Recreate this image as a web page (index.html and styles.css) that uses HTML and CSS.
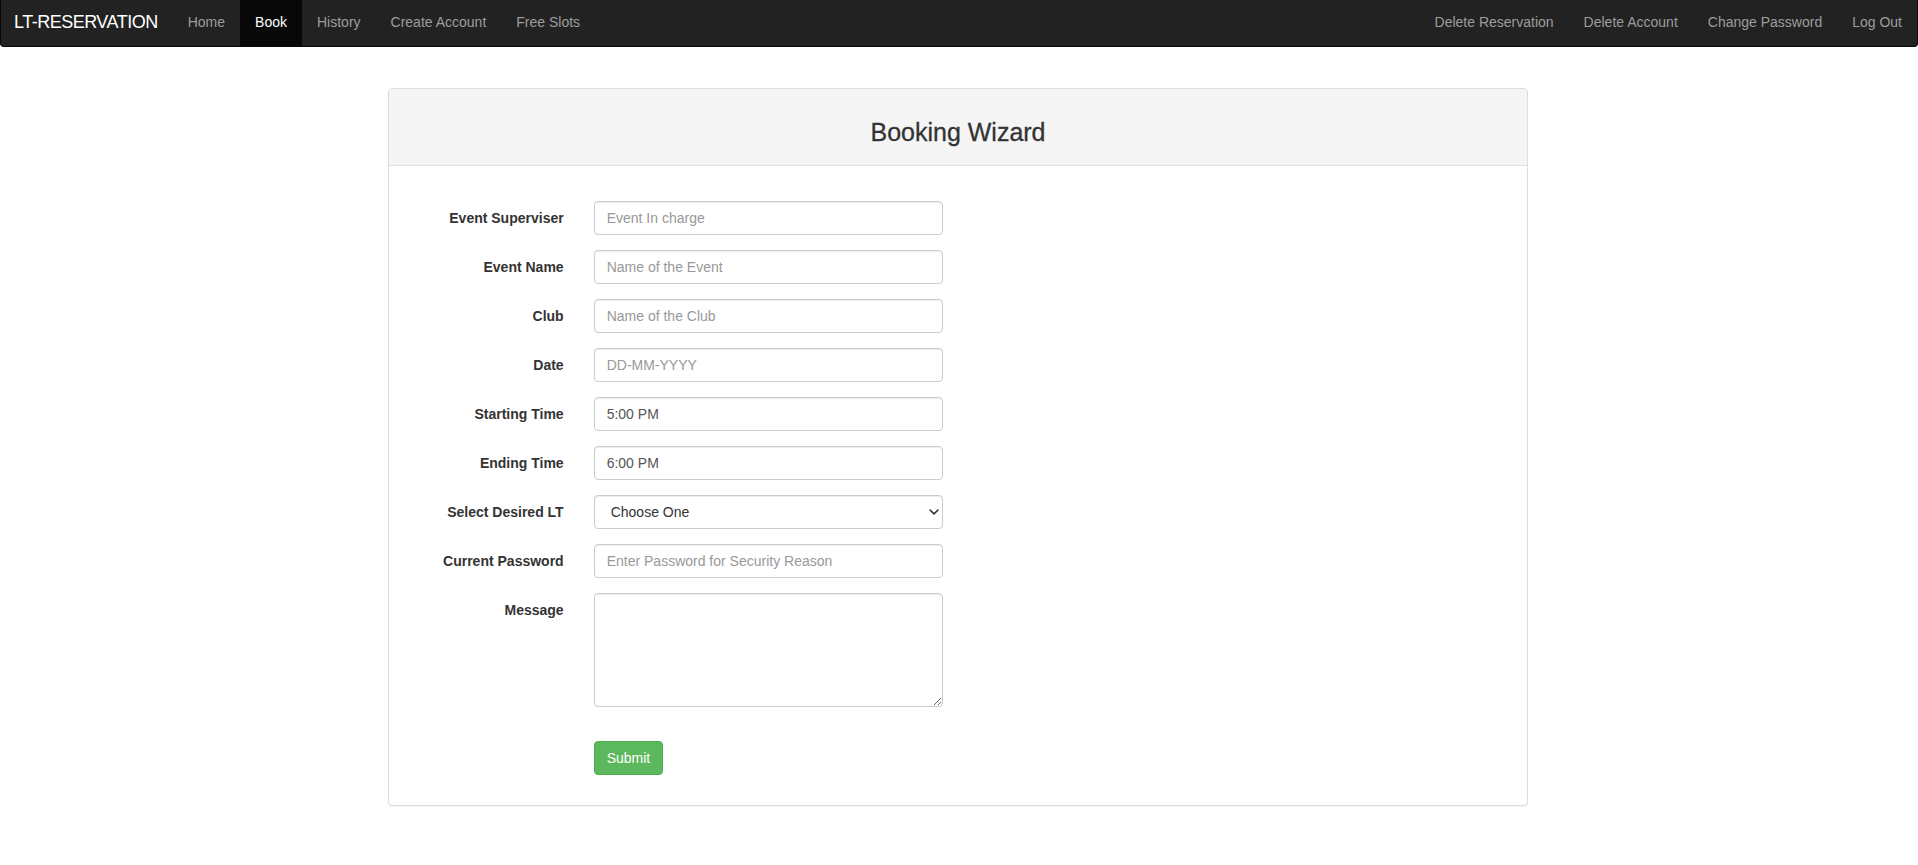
FILE: index.html
```html
<!DOCTYPE html>
<html lang="en">
<head>
<meta charset="utf-8">
<title>LT-RESERVATION - Book</title>
<link rel="stylesheet" href="styles.css">
</head>
<body>
<nav class="navbar">
  <a class="brand" href="#">LT-RESERVATION</a>
  <ul class="nav">
    <li><a href="#">Home</a></li>
    <li class="active"><a href="#">Book</a></li>
    <li><a href="#">History</a></li>
    <li><a href="#">Create Account</a></li>
    <li><a href="#">Free Slots</a></li>
  </ul>
  <ul class="nav nav-right">
    <li><a href="#">Delete Reservation</a></li>
    <li><a href="#">Delete Account</a></li>
    <li><a href="#">Change Password</a></li>
    <li><a href="#">Log Out</a></li>
  </ul>
</nav>

<main class="container">
  <section class="panel">
    <div class="panel-heading">
      <h3 class="panel-title">Booking Wizard</h3>
    </div>
    <div class="panel-body">
      <form class="form">
        <div class="form-group">
          <label class="control-label" for="sup">Event Superviser</label>
          <div class="field"><input id="sup" class="form-control" type="text" placeholder="Event In charge"></div>
        </div>
        <div class="form-group">
          <label class="control-label" for="ename">Event Name</label>
          <div class="field"><input id="ename" class="form-control" type="text" placeholder="Name of the Event"></div>
        </div>
        <div class="form-group">
          <label class="control-label" for="club">Club</label>
          <div class="field"><input id="club" class="form-control" type="text" placeholder="Name of the Club"></div>
        </div>
        <div class="form-group">
          <label class="control-label" for="date">Date</label>
          <div class="field"><input id="date" class="form-control" type="text" placeholder="DD-MM-YYYY"></div>
        </div>
        <div class="form-group">
          <label class="control-label" for="start">Starting Time</label>
          <div class="field"><input id="start" class="form-control" type="text" value="5:00 PM"></div>
        </div>
        <div class="form-group">
          <label class="control-label" for="end">Ending Time</label>
          <div class="field"><input id="end" class="form-control" type="text" value="6:00 PM"></div>
        </div>
        <div class="form-group">
          <label class="control-label" for="lt">Select Desired LT</label>
          <div class="field select-wrap">
            <select id="lt" class="form-control select">
              <option>Choose One</option>
              <option>LT-1</option>
              <option>LT-2</option>
              <option>LT-3</option>
            </select>
            <svg class="chevron" width="10" height="6" viewBox="0 0 10 6" aria-hidden="true"><path d="M1 1 L5 4.8 L9 1" fill="none" stroke="#333" stroke-width="1.6" stroke-linecap="round" stroke-linejoin="round"/></svg>
          </div>
        </div>
        <div class="form-group">
          <label class="control-label" for="pwd">Current Password</label>
          <div class="field"><input id="pwd" class="form-control" type="password" placeholder="Enter Password for Security Reason"></div>
        </div>
        <div class="form-group">
          <label class="control-label" for="msg">Message</label>
          <div class="field"><textarea id="msg" class="form-control textarea" rows="5"></textarea></div>
        </div>
        <div class="form-group submit-group">
          <div class="control-label"></div>
          <div class="field"><button type="submit" class="btn-success">Submit</button></div>
        </div>
      </form>
    </div>
  </section>
</main>
</body>
</html>
```

FILE: styles.css
```css
* {
  box-sizing: border-box;
}

html, body {
  margin: 0;
  padding: 0;
  background: #fff;
}

body {
  font-family: "Liberation Sans", Arial, Helvetica, sans-serif;
  font-size: 14px;
  line-height: 1.42857143;
  color: #333;
}

a {
  text-decoration: none;
}

/* ---------- navbar ---------- */
.navbar {
  display: flex;
  align-items: stretch;
  height: 47px;
  background: #222;
  border: 1px solid #080808;
  border-top: 0;
  border-radius: 0 0 4px 4px;
  margin-bottom: 20px;
}

.brand {
  display: block;
  padding: 12px 15px 0 13px;
  font-size: 18px;
  line-height: 20px;
  letter-spacing: -0.5px;
  color: #fff;
}

.nav {
  display: flex;
  list-style: none;
  margin: 0;
  padding: 0;
}

.nav li a {
  display: block;
  height: 46px;
  padding: 12px 15px 0;
  line-height: 20px;
  color: #9d9d9d;
}

.nav li.active a {
  background: #080808;
  color: #fff;
}

.nav-right {
  margin-left: auto;
}

/* ---------- panel ---------- */
.container {
  width: 1140px;
  margin-left: calc(50% - 571px);
  padding-top: 21px;
}

.panel {
  background: #fff;
  border: 1px solid #ddd;
  border-radius: 4px;
  box-shadow: 0 1px 1px rgba(0, 0, 0, 0.05);
  margin-bottom: 20px;
}

.panel-heading {
  background: #f5f5f5;
  border-bottom: 1px solid #ddd;
  border-radius: 3px 3px 0 0;
  padding: 10px 15px;
}

.panel-title {
  margin: 20px 0 10px;
  font-size: 25px;
  font-weight: 500;
  line-height: 26.4px;
  text-align: center;
  color: #333;
  -webkit-text-stroke: 0.3px #333;
}

.panel-body {
  padding: 15px;
}

/* ---------- form ---------- */
.form {
  margin: 20px -15px 0;
}

.form-group {
  display: grid;
  grid-template-columns: 16.66667% 33.33333%;
  margin-bottom: 15px;
}

.control-label {
  padding: 7px 15px 0;
  margin: 0;
  text-align: right;
  font-weight: bold;
  line-height: 20px;
}

.field {
  padding: 0 15px;
}

.form-control {
  display: block;
  width: 100%;
  height: 34px;
  padding: 6px 12px;
  font-family: inherit;
  font-size: 14px;
  line-height: 1.42857143;
  color: #555;
  background: #fff;
  border: 1px solid #ccc;
  border-radius: 4px;
  box-shadow: inset 0 1px 1px rgba(0, 0, 0, 0.075);
  outline: none;
}

.form-control::placeholder {
  color: #999;
  opacity: 1;
}

.select-wrap {
  position: relative;
}

.select {
  -webkit-appearance: none;
  appearance: none;
  padding-left: 16px;
  color: #333;
}

.chevron {
  position: absolute;
  right: 19px;
  top: 14px;
  pointer-events: none;
}

.textarea {
  height: 114px;
  resize: vertical;
}

.submit-group {
  margin-top: 34px;
}

.btn-success {
  display: inline-block;
  padding: 6px 12px;
  font-family: inherit;
  font-size: 14px;
  line-height: 20px;
  color: #fff;
  background: #5cb85c;
  border: 1px solid #4cae4c;
  border-radius: 4px;
  cursor: pointer;
}
```
